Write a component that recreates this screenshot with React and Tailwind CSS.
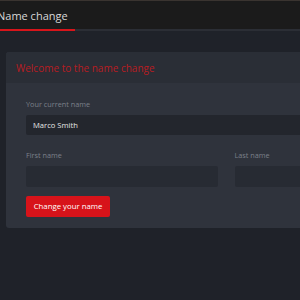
export default function App() {
  return (
    <div
      className="w-[300px] h-[300px] overflow-hidden bg-[#1f2229]"
      style={{ fontFamily: '"Open Sans", "Noto Sans", sans-serif' }}
    >
      <div className="w-[460px]">
        <div className="h-[29px] bg-[#1b1b1b] border-t border-[#3a3430] flex items-center">
          <span className="ml-[-3px] text-[11px] leading-none text-[#d8d8d8]">Name change</span>
        </div>
        <div className="h-[2px] bg-[#2b2e35]">
          <div className="w-[75px] h-full bg-[#d7151b]" />
        </div>
        <div className="pt-[21px] pl-[6px]">
          <div className="w-[440px] rounded-[3px] overflow-hidden bg-[#2f333c]">
            <div className="h-[31px] bg-[#2a2e36] px-[10px] flex items-center">
              <span className="text-[10px] leading-none text-[#b81c22]">Welcome to the name change</span>
            </div>
            <div className="px-[20px] pt-[16px] pb-[11px]">
              <div className="text-[7.3px] leading-[10px] text-[#7b808a]">Your current name</div>
              <div className="mt-[6px] h-[20px] rounded-[2px] bg-[#23262d] flex items-center px-[7px]">
                <span className="text-[7.6px] leading-none text-[#e6e6e6] pt-px">Marco Smith</span>
              </div>
              <div className="mt-[15px] grid grid-cols-2 gap-x-[17px]">
                <div>
                  <div className="text-[7.3px] leading-[10px] text-[#7b808a]">First name</div>
                  <div className="mt-[6px] h-[21px] rounded-[2px] bg-[#272b33]" />
                </div>
                <div>
                  <div className="text-[7.3px] leading-[10px] text-[#7b808a]">Last name</div>
                  <div className="mt-[6px] h-[21px] rounded-[2px] bg-[#272b33]" />
                </div>
              </div>
              <div className="mt-[9px]">
                <div className="w-[84px] h-[21px] rounded-[2px] bg-[#d7131a] flex items-center justify-center">
                  <span className="text-[7.8px] leading-none text-white">Change your name</span>
                </div>
              </div>
            </div>
          </div>
        </div>
      </div>
    </div>
  );
}
